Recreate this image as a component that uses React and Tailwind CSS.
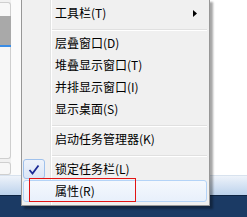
const font = "font-['Noto_Sans_CJK_SC','Microsoft_YaHei',sans-serif]"

function Item({ label, arrow, checked, hover }) {
  return (
    <div
      className={`relative z-10 mx-[1px] mr-[2px] flex h-[22px] items-center rounded-[3px] border ${
        hover
          ? 'border-[#b4d3f7] bg-gradient-to-b from-[#f5f8fd] to-[#e8f0fb]'
          : 'border-transparent'
      }`}
    >
      <div className="flex w-[30px] justify-start">
        {checked && (
          <div className="ml-[-1px] flex h-[20px] w-[22px] items-center justify-center rounded-[3px] border border-[#9fc1ec] bg-gradient-to-b from-[#eef3fb] to-[#dbe6f6]">
            <svg width="12" height="11" viewBox="0 0 12 11">
              <path d="M1.5 6 L4.5 9.5 L10.5 1.5" fill="none" stroke="#1c2a94" strokeWidth="1.8" />
            </svg>
          </div>
        )}
      </div>
      <span className="pl-[1px] text-[12px] leading-[22px] text-black">{label}</span>
      {arrow && (
        <svg className="ml-auto mr-[9px]" width="4" height="7" viewBox="0 0 4 7">
          <path d="M0 0 L4 3.5 L0 7 Z" fill="#000" />
        </svg>
      )}
    </div>
  )
}

function Sep() {
  return (
    <div className="h-[8px] pt-[5px] pl-[30px] pr-[2px]">
      <div className="h-[1px] bg-[#e0e0e0]" />
      <div className="h-[1px] bg-white" />
    </div>
  )
}

export default function App() {
  return (
    <div className={`relative h-[217px] w-[247px] overflow-hidden bg-white ${font}`}>
      <div className="flex h-full flex-col">
        <div className="flex flex-1">
          <div className="flex w-[11px] flex-col bg-[#f1f1f1]">
            <div className="mt-[2px] h-[14px] rounded-tr-[3px] border-r border-t border-[#cfcfcf] bg-[#f7f7f7]" />
            <div className="h-[31px] border-b-2 border-[#3b8de6] bg-[#a9a9a9]" />
            <div className="flex-1 border-r border-[#cfcfcf] bg-[#f7f7f7]" />
            <div className="h-[4px] rounded-br-[3px] border-b border-r border-[#cfcfcf] bg-[#f7f7f7]" />
            <div className="mt-[3px] h-[13px] rounded-r-[3px] border border-l-0 border-[#cfcfcf] bg-[#f7f7f7]" />
          </div>
          <div className="w-[10px] bg-[#fbfbfb]" />
          <div className="flex-1 bg-white" />
        </div>
        <div className="h-[42px]">
          <div className="h-[20px] border-t border-[#d8e2ee] bg-gradient-to-b from-[#eef3fa] to-[#bcd2ec]" />
          <div className="h-[1px] bg-[#0d2443]" />
          <div className="h-[21px] bg-[#1b3a64]" />
        </div>
      </div>

      <div className="absolute left-[21px] top-[-1px] w-[189px] border border-[#979797] bg-[#f0f0f0] pb-[3px] pt-[2px] shadow-[3px_3px_2px_rgba(0,0,0,0.35)]">
        <div className="absolute bottom-0 left-[28px] top-0 w-[2px] border-l border-[#e2e3e3] bg-white" />
        <Item label="工具栏(T)" arrow />
        <Sep />
        <Item label="层叠窗口(D)" />
        <Item label="堆叠显示窗口(T)" />
        <Item label="并排显示窗口(I)" />
        <Item label="显示桌面(S)" />
        <Sep />
        <Item label="启动任务管理器(K)" />
        <Sep />
        <Item label="锁定任务栏(L)" checked />
        <Item label="属性(R)" hover />
      </div>

      <div className="absolute left-[29px] top-[178px] z-20 h-[24px] w-[107px] border border-[#e21414]" />
    </div>
  )
}
